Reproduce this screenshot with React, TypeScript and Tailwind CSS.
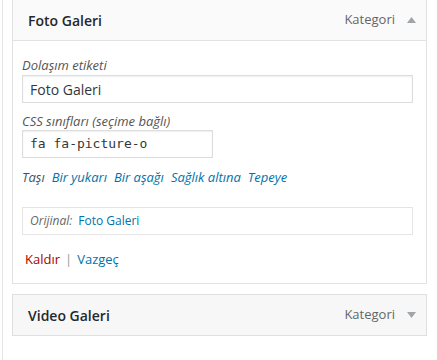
import React from "react";

const Up = () => (
  <svg width="9" height="6" viewBox="0 0 9 6" className="block">
    <path d="M4.5 0 L9 6 L0 6 Z" fill="#a0a5aa" />
  </svg>
);
const Down = () => (
  <svg width="9" height="6" viewBox="0 0 9 6" className="block">
    <path d="M0 0 L9 0 L4.5 6 Z" fill="#a0a5aa" />
  </svg>
);

export default function App() {
  return (
    <div
      className="w-[437px] h-[360px] bg-white overflow-hidden"
      style={{ fontFamily: '"Open Sans", "Noto Sans", sans-serif' }}
    >
      <div className="ml-[2px] h-full border-l border-[#e5e5e5] pl-[9px] w-[425px]">
        {/* Foto Galeri card */}
        <div className="w-[415px]">
          <div className="h-[41px] bg-[#fafafa] border-x border-b border-[#e2e2e2] flex items-center pl-[15px] pr-[10px]">
            <span className="text-[14px] font-semibold text-[#23282d]">Foto Galeri</span>
            <span className="ml-auto text-[13px] text-[#666]">Kategori</span>
            <span className="ml-[12px] mr-[0px]">
              <Up />
            </span>
          </div>
          <div className="border-x border-b border-[#e2e2e2] bg-white pl-[9px] pt-[15px] pb-[15px]">
            <div className="text-[13px] italic text-[#555] leading-[18px]">Dolaşım etiketi</div>
            <div className="mt-[1px] w-[391px] h-[28px] border border-[#ddd] shadow-[inset_0_1px_2px_rgba(0,0,0,0.07)] flex items-center pl-[7px] text-[14px] text-[#32373c]">
              Foto Galeri
            </div>
            <div className="mt-[9px] text-[13px] italic text-[#555] leading-[18px]">CSS sınıfları (seçime bağlı)</div>
            <div
              className="w-[191px] h-[28px] border border-[#ddd] shadow-[inset_0_1px_2px_rgba(0,0,0,0.07)] flex items-center pl-[7px] text-[13px] text-[#32373c]"
              style={{ fontFamily: '"DejaVu Sans Mono", "Liberation Mono", monospace' }}
            >
              fa fa-picture-o
            </div>
            <div className="mt-[10px] text-[13px] italic leading-[18px] flex gap-[7px]">
              <span className="text-[#3f5366]">Taşı</span>
              <span className="text-[#0073aa]">Bir yukarı</span>
              <span className="text-[#0073aa]">Bir aşağı</span>
              <span className="text-[#0073aa]">Sağlık altına</span>
              <span className="text-[#0073aa]">Tepeye</span>
            </div>
            <div className="mt-[21px] w-[391px] h-[28px] border border-[#e5e5e5] flex items-center pl-[7px] text-[12px]">
              <span className="italic text-[#666]">Orijinal:</span>
              <span className="ml-[6px] text-[#0073aa]">Foto Galeri</span>
            </div>
            <div className="mt-[15px] text-[13px] leading-[18px] flex items-center pl-[3px]">
              <span className="text-[#a00]">Kaldır</span>
              <span className="mx-[5px] text-[#999]">|</span>
              <span className="text-[#0073aa]">Vazgeç</span>
            </div>
          </div>
        </div>

        {/* Video Galeri card */}
        <div className="mt-[10px] w-[415px] h-[42px] bg-[#f7f7f7] border border-[#dfdfdf] flex items-center pl-[15px] pr-[10px]">
          <span className="text-[14px] font-semibold text-[#23282d]">Video Galeri</span>
          <span className="ml-auto text-[13px] text-[#666]">Kategori</span>
          <span className="ml-[12px]">
            <Down />
          </span>
        </div>
      </div>
    </div>
  );
}
